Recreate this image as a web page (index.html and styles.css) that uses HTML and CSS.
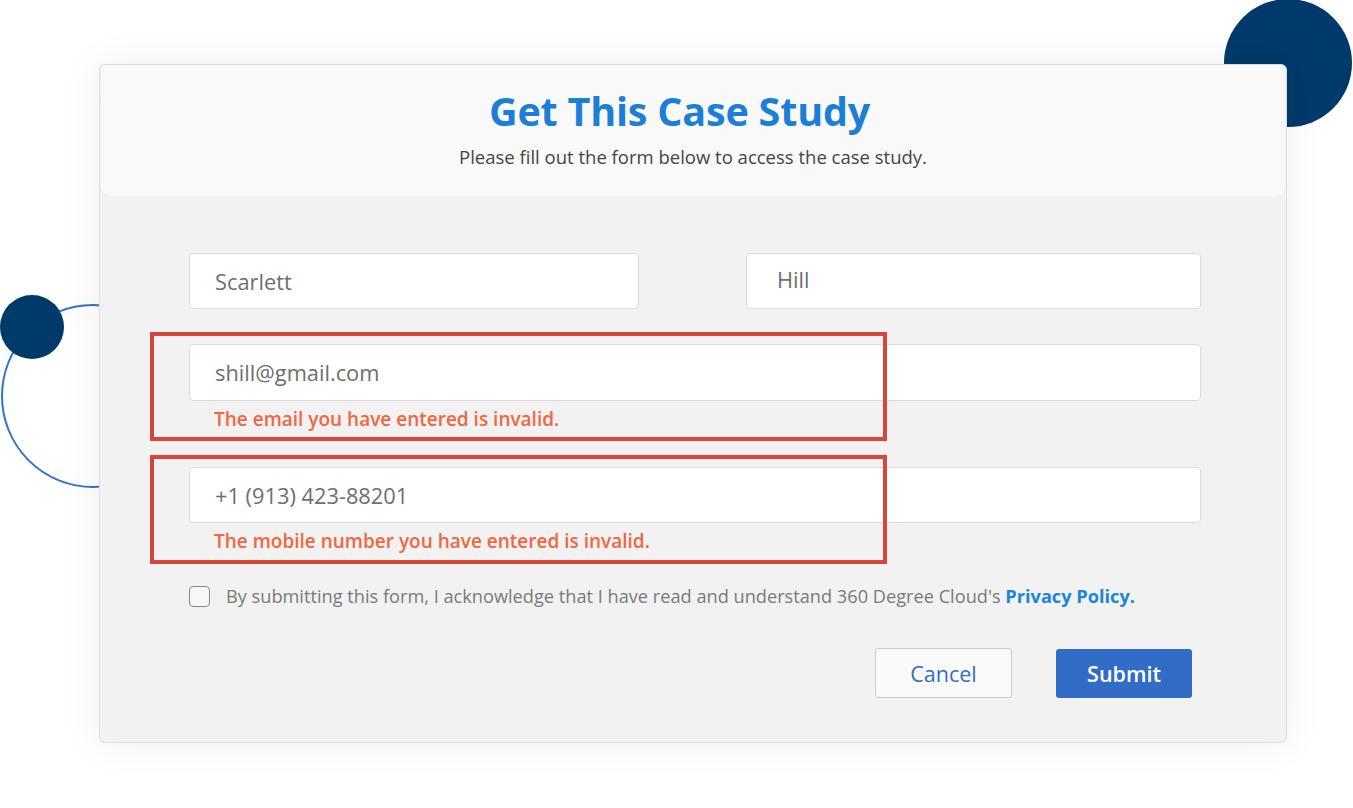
FILE: index.html
```html
<!DOCTYPE html>
<html lang="en">
<head>
<meta charset="utf-8">
<title>Get This Case Study</title>
<link rel="stylesheet" href="styles.css">
</head>
<body>
<div class="stage">
  <div class="deco-dot-top"></div>
  <div class="deco-ring"></div>
  <div class="deco-dot-left"></div>

  <section class="card">
    <header class="card-head">
      <h1 class="title">Get This Case Study</h1>
      <p class="subtitle">Please fill out the form below to access the case study.</p>
    </header>

    <form class="card-body">
      <div class="name-row">
        <div class="input"><span class="value">Scarlett</span></div>
        <div class="input input-last"><span class="value">Hill</span></div>
      </div>

      <div class="field field-email">
        <div class="input"><span class="value">shill@gmail.com</span></div>
        <p class="error">The email you have entered is invalid.</p>
        <div class="highlight"></div>
      </div>

      <div class="field field-phone">
        <div class="input"><span class="value">+1 (913) 423-88201</span></div>
        <p class="error">The mobile number you have entered is invalid.</p>
        <div class="highlight"></div>
      </div>

      <label class="consent">
        <span class="checkbox"></span>
        <span class="consent-text">By submitting this form, I acknowledge that I have read and understand 360 Degree Cloud's <a class="policy" href="#">Privacy Policy.</a></span>
      </label>

      <div class="actions">
        <button type="button" class="btn btn-cancel">Cancel</button>
        <button type="button" class="btn btn-submit">Submit</button>
      </div>
    </form>
  </section>
</div>
</body>
</html>
```

FILE: styles.css
```css
* {
  box-sizing: border-box;
}

html, body {
  margin: 0;
  padding: 0;
  background: #ffffff;
}

body {
  font-family: "Open Sans", "Noto Sans", sans-serif;
  color: #444;
}

.stage {
  position: relative;
  width: 1353px;
  height: 808px;
  overflow: hidden;
  padding: 64px 0 0 99px;
}

/* decorative shapes behind the card */
.deco-dot-top {
  position: absolute;
  left: 1224px;
  top: -1px;
  width: 128px;
  height: 128px;
  border-radius: 50%;
  background: #003a6b;
  z-index: 0;
}

.deco-ring {
  position: absolute;
  left: 1px;
  top: 304px;
  width: 184px;
  height: 184px;
  border-radius: 50%;
  border: 2.5px solid #3272c9;
  z-index: 0;
}

.deco-dot-left {
  position: absolute;
  left: 0;
  top: 295px;
  width: 64px;
  height: 64px;
  border-radius: 50%;
  background: #003a6b;
  z-index: 1;
}

/* card */
.card {
  position: relative;
  z-index: 2;
  width: 1188px;
  height: 679px;
  background: #f2f2f2;
  border: 1px solid #dedede;
  border-radius: 6px;
  box-shadow: 0 0 40px rgba(0, 0, 0, 0.07);
}

.card-head {
  background: #f9f9f9;
  border-radius: 6px 6px 10px 10px;
  margin: 0 1px;
  padding: 20px 0 27px;
  text-align: center;
}

.title {
  margin: 0;
  padding-right: 27px;
  font-size: 39.5px;
  line-height: 52px;
  font-weight: 700;
  color: #1b7fd6;
  letter-spacing: -0.2px;
}

.subtitle {
  margin: 8px 0 0;
  font-size: 18.5px;
  line-height: 24px;
  color: #454545;
}

.card-body {
  padding: 57px 85px 0 89px;
}

.input {
  height: 56px;
  background: #ffffff;
  border: 1px solid #dcdcdc;
  border-radius: 4px;
  display: flex;
  align-items: center;
  padding-left: 25px;
  font-size: 21.8px;
  color: #6e6e6e;
}

.name-row {
  display: grid;
  grid-template-columns: 450px 455px;
  column-gap: 107px;
}

.input-last {
  padding-left: 30px;
  padding-bottom: 3px;
}

.field {
  position: relative;
}

.field-email {
  margin-top: 35px;
}

.field-email .input {
  height: 57px;
}

.field-phone {
  margin-top: 36px;
}

.error {
  margin: 6px 0 0 25px;
  font-size: 19px;
  line-height: 24px;
  font-weight: 600;
  color: #f3663f;
}

/* red call-out frame over the invalid fields */
.highlight {
  position: absolute;
  left: -39px;
  top: -12px;
  width: 737px;
  height: 109px;
  border: 4px solid #d5473b;
  pointer-events: none;
}

.consent {
  display: flex;
  align-items: center;
  margin-top: 31px;
  font-size: 18.2px;
  line-height: 24px;
  color: #7a7a7a;
}

.checkbox {
  width: 21px;
  height: 21px;
  border: 1.5px solid #8a8a8a;
  border-radius: 4px;
  background: #f7f7f7;
  margin-right: 16px;
  flex: none;
}

.policy {
  color: #1c86d9;
  font-weight: 700;
  text-decoration: none;
}

.actions {
  display: flex;
  justify-content: flex-end;
  align-items: center;
  gap: 44px;
  margin-top: 40px;
  padding-right: 9px;
}

.btn {
  font-family: inherit;
  font-size: 21.5px;
  height: 50px;
  border-radius: 3px;
  cursor: pointer;
}

.btn-cancel {
  width: 137px;
  background: #fafafa;
  border: 1px solid #cccccc;
  color: #2f6ec6;
}

.btn-submit {
  width: 136px;
  height: 49px;
  background: #316dc6;
  border: none;
  color: #ffffff;
  font-weight: 600;
}
```
